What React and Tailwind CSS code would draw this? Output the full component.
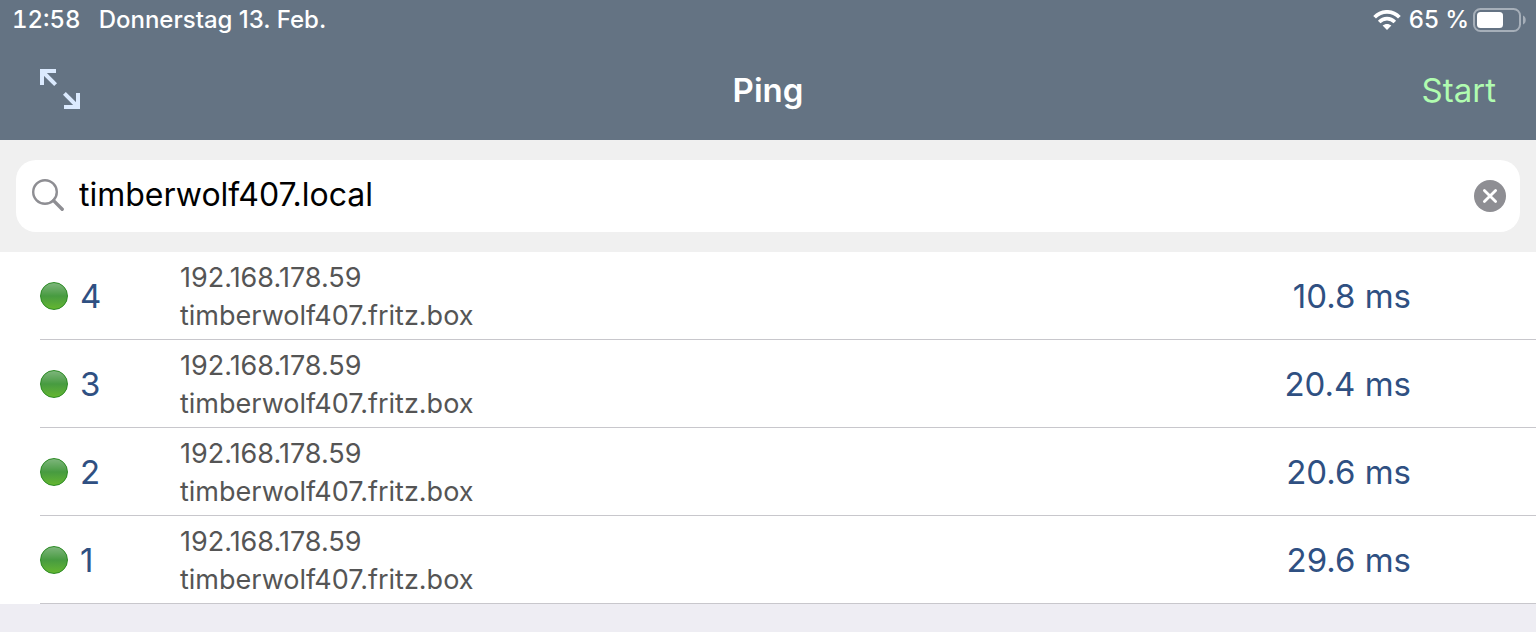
import React, { useState } from 'react';

const initialReplies = [
  { seq: 4, ip: '192.168.178.59', host: 'timberwolf407.fritz.box', time: '10.8 ms' },
  { seq: 3, ip: '192.168.178.59', host: 'timberwolf407.fritz.box', time: '20.4 ms' },
  { seq: 2, ip: '192.168.178.59', host: 'timberwolf407.fritz.box', time: '20.6 ms' },
  { seq: 1, ip: '192.168.178.59', host: 'timberwolf407.fritz.box', time: '29.6 ms' }
];

const WifiIcon = () => (
  <svg viewBox="0 0 28 20" className="h-5 w-7" fill="none" aria-hidden="true">
    <path d="M1.6 7.2C8.4 0.1 19.6 0.1 26.4 7.2" stroke="white" strokeWidth="3.8" />
    <path d="M6.2 12C10.6 7.5 17.4 7.5 21.8 12" stroke="white" strokeWidth="3.6" />
    <path d="M14 20L9.6 15.6C12.1 13.3 15.9 13.3 18.4 15.6Z" fill="white" />
  </svg>
);

const BatteryIcon = () => (
  <svg viewBox="0 0 54 24" className="h-6 w-[54px]" fill="none" aria-hidden="true">
    <rect x="1" y="1" width="46" height="22" rx="6.5" stroke="#a6afb9" strokeWidth="2" />
    <rect x="4" y="4" width="26" height="16" rx="3.5" fill="white" />
    <path d="M50 7.5C53.6 8.6 53.6 15.4 50 16.5Z" fill="#a6afb9" />
  </svg>
);

const ExpandIcon = () => (
  <svg viewBox="0 0 40 44" className="h-11 w-10" fill="none" stroke="#dbeafe" strokeWidth="4" aria-hidden="true">
    <path d="M2 16V2H16" />
    <path d="M2 2L15.6 15.6" />
    <path d="M38 24V38H24" />
    <path d="M38 38L24.4 24.4" />
  </svg>
);

const SearchIcon = () => (
  <svg viewBox="0 0 32 32" className="mb-0.5 h-8 w-8 shrink-0" fill="none" stroke="#8e8e93" aria-hidden="true">
    <circle cx="13" cy="13" r="11.8" strokeWidth="2.4" />
    <path d="M21.6 21.6L30.2 30.2" strokeWidth="3.4" strokeLinecap="round" />
  </svg>
);

const ClearIcon = () => (
  <svg viewBox="0 0 32 32" className="h-8 w-8" aria-hidden="true">
    <circle cx="16" cy="16" r="16" fill="#8e8e93" />
    <path d="M10.4 10.4L21.6 21.6M21.6 10.4L10.4 21.6" stroke="white" strokeWidth="2.8" strokeLinecap="round" />
  </svg>
);

const App = () => {
  const [host, setHost] = useState('timberwolf407.local');

  return (
    <div className="min-h-screen bg-[#eeedf3] font-['Inter','Liberation_Sans',sans-serif]">
      <header className="bg-[#647383] text-white">
        {/* Status bar */}
        <div className="flex h-10 items-center justify-between pl-3 pr-[9px] text-2xl font-medium">
          <div className="flex gap-[18px]">
            <span className="tabular-nums">12:58</span>
            <span>Donnerstag 13. Feb.</span>
          </div>
          <div className="flex items-center">
            <WifiIcon />
            <span className="ml-2 mr-1">65 %</span>
            <BatteryIcon />
          </div>
        </div>

        {/* Navigation bar */}
        <div className="grid h-[100px] grid-cols-3 items-center px-10 pt-0.5 text-[33px]">
          <button type="button" aria-label="Fullscreen" className="justify-self-start">
            <ExpandIcon />
          </button>
          <h1 className="justify-self-center font-semibold">Ping</h1>
          <button type="button" className="justify-self-end text-[#b0fcb0]">
            Start
          </button>
        </div>
      </header>

      {/* Host search */}
      <div className="bg-[#f0f0f0] px-4 py-5">
        <div className="flex h-[72px] items-center gap-[15px] rounded-[20px] bg-white pl-4 pr-3.5">
          <SearchIcon />
          <input
            type="text"
            aria-label="Host"
            value={host}
            onChange={(e) => setHost(e.target.value)}
            className="min-w-0 flex-1 bg-transparent pb-0.5 text-[32px] text-black outline-none"
          />
          <button type="button" aria-label="Clear" onClick={() => setHost('')}>
            <ClearIcon />
          </button>
        </div>
      </div>

      {/* Replies, newest first */}
      <ul className="bg-white">
        {initialReplies.map((reply) => (
          <li key={reply.seq} className="bg-white pl-10">
            <div className="flex h-[88px] items-center border-b border-[#c8c7cc] pr-[125px]">
              <div className="flex w-[140px] items-center gap-3">
                <span className="h-7 w-7 rounded-full border border-[#2a8a22] bg-linear-to-b from-[#7db57b] via-[#479b40] to-[#64b62f]" />
                <span className="pt-0.5 text-[33px] text-[#2f5082]">{reply.seq}</span>
              </div>
              <div className="flex-1 pt-0.5 text-[27px] leading-[38px] text-[#555555]">
                <p>{reply.ip}</p>
                <p>{reply.host}</p>
              </div>
              <span className="pt-0.5 text-[33px] text-[#2f5082]">{reply.time}</span>
            </div>
          </li>
        ))}
      </ul>
    </div>
  );
};

export default App;
